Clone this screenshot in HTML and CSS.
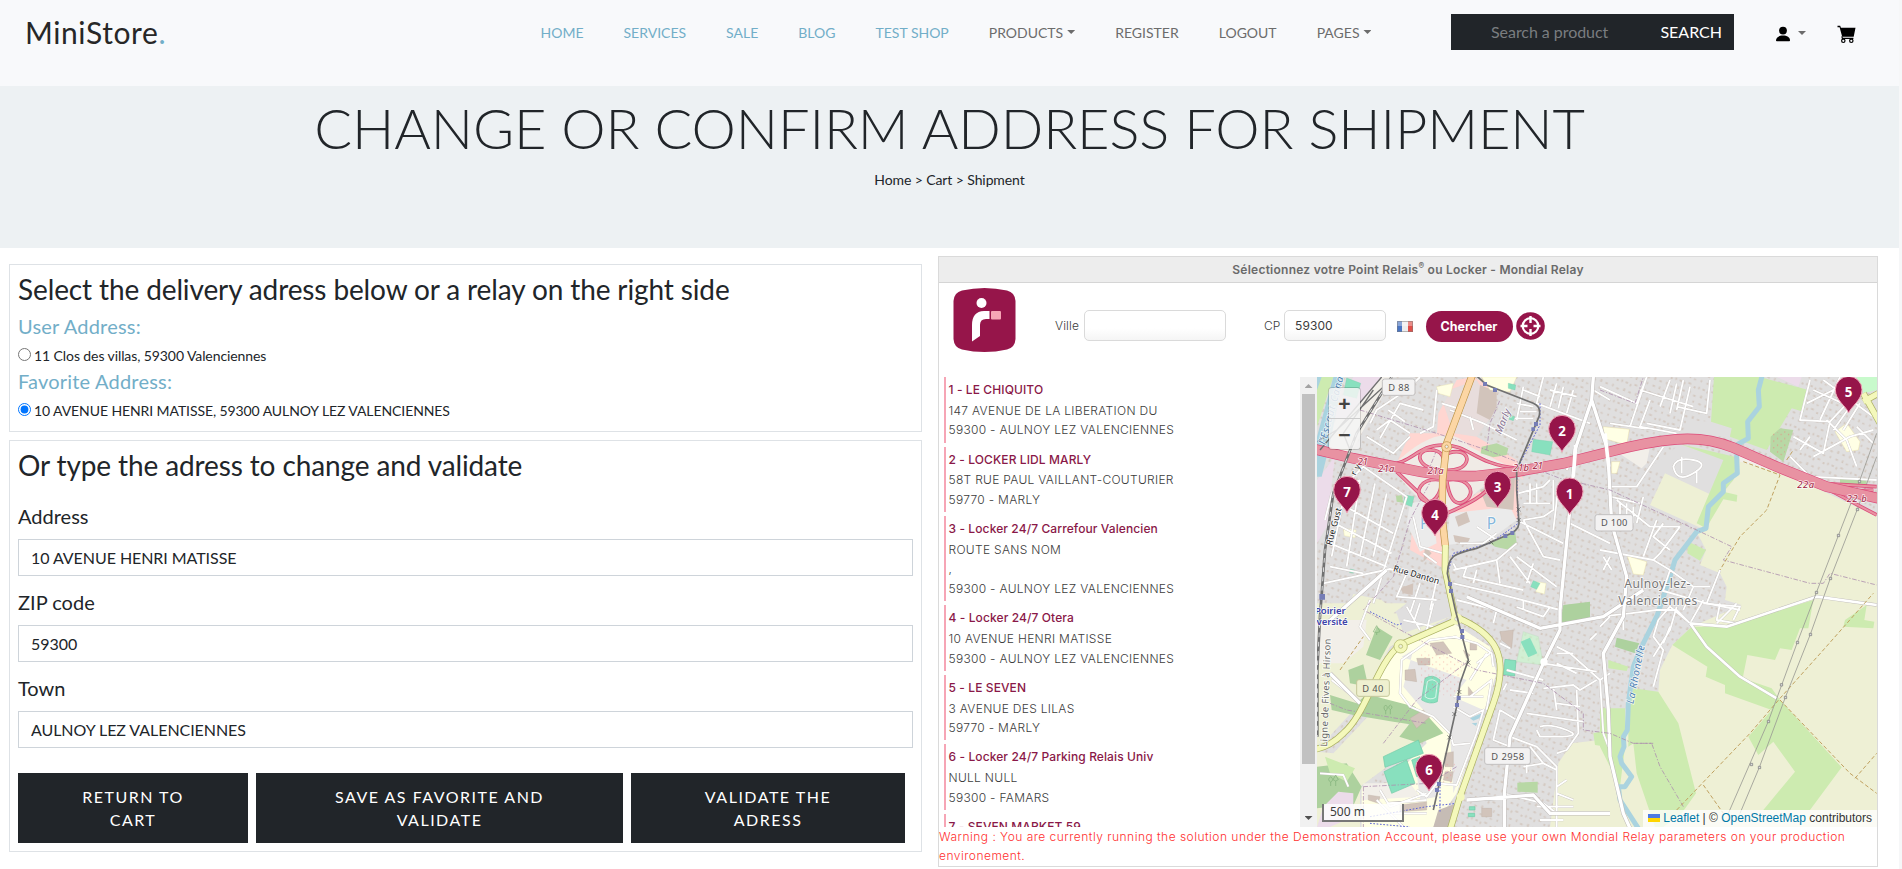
FILE: index.html
```html
<!DOCTYPE html>
<html lang="en">
<head>
<meta charset="utf-8">
<title>MiniStore - Shipment</title>
<link rel="stylesheet" href="styles.css">
</head>
<body>
<div class="page">
<header class="topbar">
  <a class="logo">MiniStore<span>.</span></a>
  <nav class="nav">
    <a class="accent">HOME</a><a class="accent">SERVICES</a><a class="accent">SALE</a><a class="accent">BLOG</a><a class="accent">TEST SHOP</a>
    <a class="drop">PRODUCTS</a><a>REGISTER</a><a>LOGOUT</a><a class="drop">PAGES</a>
  </nav>
  <form class="search"><input type="text" placeholder="Search a product"><button type="button">SEARCH</button></form>
  <div class="tools">
    <span class="drop user"><svg width="18" height="18" viewBox="0 0 18 18"><ellipse cx="9" cy="5.6" rx="3.9" ry="3.9"/><path d="M2 15.6c0-3.4 3-5 7-5s7 1.600 7 5c0 .5-.3.7-.8.700H2.800c-.5 0-.8-.2-.8-.7z"/></svg></span>
    <svg width="19" height="19" viewBox="0 0 19 19"><path d="M.5.8h2.700l.7 2h14.600l-1.800 9H5.200L2.600 2.200H.5z"/><path d="M4.800 11.300l.6 2h11" fill="none" stroke="#000" stroke-width="1.200"/><circle cx="6.300" cy="15.800" r="1.700" fill="none" stroke="#000" stroke-width="1.200"/><circle cx="14.300" cy="15.800" r="1.700" fill="none" stroke="#000" stroke-width="1.200"/></svg>
  </div>
</header>
<section class="banner">
  <h1>CHANGE OR CONFIRM ADDRESS FOR SHIPMENT</h1>
  <p>Home &gt; Cart &gt; Shipment</p>
</section>
<main class="content">
  <div class="left">
    <section class="card choose">
      <h3>Select the delivery adress below or a relay on the right side</h3>
      <h5>User Address:</h5>
      <label class="pick"><input type="radio" name="a"><span>11 Clos des villas, 59300 Valenciennes</span></label>
      <h5>Favorite Address:</h5>
      <label class="pick"><input type="radio" name="a" checked><span>10 AVENUE HENRI MATISSE, 59300 AULNOY LEZ VALENCIENNES</span></label>
    </section>
    <section class="card typed">
      <h3>Or type the adress to change and validate</h3>
      <label class="field"><span>Address</span><input value="10 AVENUE HENRI MATISSE"></label>
      <label class="field"><span>ZIP code</span><input value="59300"></label>
      <label class="field"><span>Town</span><input value="AULNOY LEZ VALENCIENNES"></label>
      <div class="buttons"><button>RETURN TO<br>CART</button><button>SAVE AS FAVORITE AND<br>VALIDATE</button><button>VALIDATE THE<br>ADRESS</button></div>
    </section>
  </div>
  <section class="relay">
    <div class="relay-title">Sélectionnez votre Point Relais<sup>®</sup> ou Locker - Mondial Relay</div>
    <div class="relay-form">
      <svg class="mr" width="63" height="64" viewBox="0 0 63 64"><path d="M9 2.500Q31.500-2.500 54 2.500Q62 4.500 62.500 13V51Q62 59.500 54 61.500Q31.500 66.500 9 61.500Q1 59.500.5 51V13Q1 4.500 9 2.500z" fill="#96154a"/><circle cx="28.500" cy="15" r="5" fill="#fff"/><path d="M19 53.500V37Q19 23.500 31 23H36.500V31H33Q27 31 27 37V48z" fill="#fff"/><rect x="38" y="23" width="10" height="8.500" rx="1" fill="#f6a5b5"/></svg>
      <span class="lab ville">Ville</span><input class="in-ville">
      <span class="lab cp">CP</span><input class="in-cp" value="59300">
      <svg class="flag" width="16" height="11" viewBox="0 0 16 11"><path fill="#4a76c4" d="M0 0h5v11H0z"/><path fill="#eee" d="M5 0h6v11H5z"/><path fill="#e0504a" d="M11 0h5v11h-5z"/><path d="M0 0h16v5H0z" fill="#fff" opacity=".35"/><path d="M.5.500h15v10H.5z" fill="none" stroke="#777" stroke-opacity=".5"/></svg>
      <button class="go" type="button">Chercher</button>
      <svg class="locate" width="29" height="28" viewBox="0 0 29 28"><ellipse cx="14.500" cy="14" rx="14.300" ry="13.800" fill="#96154a"/><circle cx="14.500" cy="14" r="7.800" fill="none" stroke="#fff" stroke-width="2.200"/><path d="M14.500 4v7M14.500 17v7M4.500 14h7M17.500 14h7" stroke="#fff" stroke-width="2.400"/></svg>
    </div>
    <div class="relay-body">
      <div class="list">
        <div class="item"><b>1 - LE CHIQUITO</b><span>147 AVENUE DE LA LIBERATION DU</span><span>59300 - AULNOY LEZ VALENCIENNES</span></div>
        <div class="item"><b>2 - LOCKER LIDL MARLY</b><span>58T RUE PAUL VAILLANT-COUTURIER</span><span>59770 - MARLY</span></div>
        <div class="item"><b>3 - Locker 24/7 Carrefour Valencien</b><span>ROUTE SANS NOM</span><span>,</span><span>59300 - AULNOY LEZ VALENCIENNES</span></div>
        <div class="item"><b>4 - Locker 24/7 Otera</b><span>10 AVENUE HENRI MATISSE</span><span>59300 - AULNOY LEZ VALENCIENNES</span></div>
        <div class="item"><b>5 - LE SEVEN</b><span>3 AVENUE DES LILAS</span><span>59770 - MARLY</span></div>
        <div class="item"><b>6 - Locker 24/7 Parking Relais Univ</b><span>NULL NULL</span><span>59300 - FAMARS</span></div>
        <div class="item"><b>7 - SEVEN MARKET 59</b></div>
      </div>
      <div class="scroll"><i class="up"></i><i class="thumb"></i><i class="down"></i></div>
      <div class="map">
<svg class="tiles" viewBox="21 21 1680 1350" width="560" height="450">
<defs>
<pattern id="h" width="74" height="66" patternUnits="userSpaceOnUse" patternTransform="rotate(22)"><path fill="#d3c8c0" d="M4 6h7v6H4zM18 8h5v8h-5zM31 4h9v5H31zM50 9h6v6h-6zM64 5h5v8h-5zM5 28h6v8H5zM22 31h8v5H22zM43 28h5v7h-5zM58 33h8v5H58zM8 51h8v5H8zM28 49h5v8h-5zM42 53h7v5h-7zM63 50h5v6h-5z"/></pattern>
<pattern id="dots" width="22" height="20" patternUnits="userSpaceOnUse"><path fill="#ee7d7d" d="M3 4h3v3H3zM14 12h3v3h-3z"/></pattern>
<g id="pin"><path d="M0 0C-7-20-40-38-40-70A40 40 0 1 1 40-70C40-38 7-20 0 0z" fill="#96154a" stroke="#f3a9bb" stroke-width="3"/></g>
<g id="minor"><path d="M180 160L200 120 290 60 330 21M200 180L240 150 300 190M235 120L285 155M210 205L270 100 340 120M170 200L250 250 300 200M45 450L65 370 150 330M65 560L110 340 160 290 290 380 240 540 190 700M90 400L250 490M75 460L245 550M60 520L230 590M60 590L160 610M150 330L110 590M195 340L150 560M230 370L190 560M40 640L240 597 290 610M430 580L440 600M430 600L560 570 620 520M470 590L460 620 640 660M560 570L570 640M500 600L490 640M620 560L740 650M600 560L660 640M670 580L650 640M430 640L560 670 750 720M290 610L260 680 380 690M330 640L300 730M380 630L360 720M620 450L760 520M640 450L700 560 750 570M625 370L700 350 720 330M640 400H720M730 330V420L700 440M660 340V400M680 340V400M700 440L640 450M745 350L730 480M700 21L680 100 840 160M720 60L800 80M740 40L720 110M760 50L745 115M790 60L770 130M640 50L620 150M420 120L520 160 620 210M480 140L490 180M620 100L670 110M640 60L690 80M630 125H680M615 145H670M850 60L900 90M800 240L770 300M780 460L900 520M310 440L330 530 400 550M500 470L560 510M450 520L520 520 560 490M340 550L380 580M380 60L370 170 330 190M395 100L460 120"/>
<path d="M870 50L980 100 1010 21M990 60L1150 110M1080 30L1050 110M1100 40L1080 130M1120 30L1100 120M1140 50L1110 180 1010 160M1020 90L990 170 1100 190M1200 30L1190 130 1100 110M900 160L1000 175M1010 21L960 170M890 350L980 350 1060 230M900 380L990 400M930 400V440M950 400V450M970 410V460M1000 380L980 460M1090 290Q1100 260 1150 270T1150 310 1090 290M1115 260V310M1160 300V340M920 390L1020 470 1110 470M1040 450L1000 560M1060 460L1030 500 1080 540M1110 470L1050 550 1030 570M870 540L1030 570 1080 600 1150 650M900 560L880 600M1230 600L1190 700M1150 650L1120 720M1080 600L1060 660M1050 660L1190 700 1290 720M1150 650H1200M880 560L905 600M1500 30L1470 150 1560 155 1630 80M1490 100L1570 60M1510 60L1620 110M1540 30L1690 140M1450 200L1540 250 1560 155M1470 240L1500 200M1440 260L1500 320 1700 330M1510 260L1620 200 1690 180M1590 21L1530 150M1550 150L1610 210 1640 290M1640 170L1690 220M1620 110L1570 180M1650 100L1600 180"/>
<g transform="translate(0 690)"><path d="M440 0L560 30 700 90M560 30L550 70M620 21L700 50 720 21M640 0V30M570 130L600 145M740 140L780 160 870 240 900 220M740 160H790M700 190L760 200 860 215M740 190L800 220M590 210L700 240M600 270L670 280M590 250L580 270M700 265L790 255 810 270 860 240M730 260L740 330M800 270L805 400 770 450 740 460M740 310L810 320M650 340L820 365M690 380Q720 370 770 390T740 410L690 410 680 390M600 410L680 440 740 500 740 620M570 330L550 420 600 440M570 330L620 360M660 440L700 490 740 510M640 500L700 490M650 480V520M740 560L770 540M740 580L790 600M690 660H760M740 620V681M680 620H790M840 120L860 100M580 580L700 610 740 640M870 240L880 400 895 440M210 570L240 620 350 580M230 610L350 600M250 640L350 640M200 600L280 681M320 570L350 590 380 550M30 520L100 525 115 560M65 240L150 305M380 550L440 555 500 400 520 330 480 350 430 320M480 430L430 435 420 400 370 350 300 320 270 280 275 180 360 120 440 110M430 110L500 130 545 160 550 200M480 240L530 160M500 190L540 160M530 330L545 240 480 290M180 0L150 80 180 120M430 290L520 290M280 60L370 80M290 20L330 90M330 10L310 70M370 10L350 90"/></g>
<path d="M1045 750L1030 800 1060 840 1030 950M1045 750L1080 710 1140 760M870 740L960 730 1040 720 1100 720 1140 760M1080 770L1060 820M1140 760L1180 690M1220 760L1280 700M1230 700L1220 750 1280 760M870 770L900 740M940 730V780M1100 710L1080 780 1030 860M1180 700L1290 710 1270 750"/></g>
</defs>
<path fill="#e0dfdf" d="M0 0h1720v1400H0z"/>
<path fill="url(#h)" d="M0 0h1720v1400H0z"/>
<!-- land use, north west -->
<path fill="#f2efe9" d="M21 200L60 180 160 21H250L110 270 21 245z"/>
<path fill="#ecdcea" d="M130 21H215L110 150 60 140zM21 330L75 260 50 470 21 520z"/>
<path fill="#cdebb0" d="M21 21H70L21 170z"/><path fill="#aad3df" d="M21 21H35L21 60zM70 21H100L60 220 35 320H21V200z"/>
<path fill="#88e0be" stroke="#6fcaa6" d="M110 24L152 40 140 85 100 75z"/>
<path fill="#ffd6d1" d="M490 21L560 60 550 130 500 200 620 270 640 330 600 300 480 290 430 310 340 300 340 210 380 200 385 130 440 30zM300 190L380 190 400 240 330 300 260 280zM600 330L625 330 625 450 500 480 470 440 430 430 500 370zM320 400L400 500 410 600 300 540 310 440z"/>
<path fill="#e0dfdf" d="M390 70L500 30 560 130 500 200 430 190z" opacity=".75"/>
<path fill="#f0ebe6" d="M250 285Q400 140 480 230L600 290Q500 360 440 420L400 430Q320 400 250 295z"/>
<path fill="#ebebeb" d="M420 430L600 410 620 450 540 510 410 525zM300 400L360 390 380 520 330 545 290 460z"/>
<path fill="#d2c4bb" d="M510 45L560 65 560 110 540 150 500 130zM510 360L615 320 610 420 530 410zM435 440L470 425 480 455 445 470zM270 655L310 640 308 675 280 670zM345 530L365 550 340 575zM430 495L480 505 470 525 435 515z"/>
<path fill="#ffffe5" stroke="#eae0a0" d="M515 21H620L600 65 540 60zM380 50L430 40 420 80 385 70zM100 475L138 480 135 503 103 497zM680 635L708 640 703 672 678 665z"/>
<path fill="#88e0be" stroke="#6fcaa6" d="M670 208L728 215 720 255 665 245zM285 375L312 380 305 410 280 400zM595 40L617 45 615 60 595 55zM670 632L690 640 680 658 662 650zM120 597L134 600 130 610 118 607zM600 135L614 140 610 152 597 148z"/>
<path fill="#b8d8a5" d="M515 230L560 220 595 235 590 255 550 262 512 250zM540 520L615 480 620 520 600 540 555 530zM770 705L840 700 840 735 770 735zM258 378L275 375 280 398 260 395z"/>
<path fill="#eef0d5" d="M130 672L215 690 250 720 240 760 50 760 110 730z"/>
<!-- land use, east -->
<g transform="translate(870 0)">
<path fill="#e0dfdf" d="M155 290L240 222 410 262 400 330 330 375 200 310zM333 155L395 175 390 200 250 195 260 150z"/>
<path fill="#eef0d5" d="M412 270L545 305 832 440V1371H-150L-125 1180-85 1120 0 1110 30 1050 60 1010 100 965 175 965 180 900 217 825 275 770 425 705 375 690 380 650 360 610 300 585 318 540 290 485 325 470 345 400 400 330zM195 310L335 375 305 475 150 405z"/>
<path fill="#e0dfdf" d="M5 880L60 895 85 960 60 1130 0 1120z"/><path fill="url(#h)" d="M5 880L60 895 85 960 60 1130 0 1120z"/>
<path fill="#cdebb0" d="M342 21H480L625 60 610 125 575 115 500 240 390 200 395 175 333 155zM240 222L410 262 400 330 370 365 412 375 410 395 370 388 318 475 290 460 370 270zM265 515L318 540 300 572 262 550zM30 1015H75V1130L60 1250 0 1130V1015zM25 870L85 890 80 903 25 895z"/>
<path fill="#c8facc" d="M770 21H832V60L790 70z"/>
<path fill="#ecdcea" d="M530 21H605L595 50z"/>
<path fill="#b8d8a5" d="M540 175L580 180 550 275 510 245 512 200zM720 325L800 325 800 345 720 345z"/><path fill="url(#dots)" d="M515 190L575 180 550 260 512 240z"/>
<path fill="#ffffe5" stroke="#e8d890" d="M10 170L88 178 80 225 10 205zM705 185L740 160 780 215 775 240 740 245zM82 558L140 575 130 615 100 612zM35 275L60 275 50 310 35 310z"/>
<path fill="#f2efe9" d="M50 245L150 230 140 280 125 295zM410 240L545 310 420 275z"/>
<path fill="#cdebb0" d="M217 825L275 770H380L640 690 625 775H600L575 840 540 835 525 870 442 855 428 925 515 955 540 990 725 1192 630 1320H490L585 1205 520 1115 475 1155 445 1100 515 1020 375 970V945L317 920 322 890zM100 955L175 965 235 1060 288 1270 245 1330 190 1371H165L110 1210 100 1120 85 1130V1010zM800 705L793 750 823 755 820 775 730 770 735 750z"/>
<path fill="#add19e" d="M50 803L118 820 105 850 45 830z"/>
<path fill="none" stroke="#aad3df" stroke-width="15" stroke-linejoin="round" d="M487 15L475 60 478 110 443 155 445 205 415 222 410 260 412 310 370 340V365L325 410 318 475 290 485 225 570 210 620 172 735 120 840 100 890 85 1000 82 1080 70 1100 72 1130 60 1160 65 1180 95 1220 75 1250H55L60 1290 115 1375"/>
</g>
<!-- land use, campus and fields south west -->
<g transform="translate(0 690)">
<path fill="#eef0d5" d="M21 10H290L250 40 420 50 240 140 150 310 21 450zM70 460L220 300 340 420 150 560V681H21V455z"/>
<path fill="#e0dfdf" d="M300 0H420V50L280 100 260 40z"/>
<path fill="#ffffe5" d="M200 250L280 120 430 70 540 140 560 220 520 340 440 580 370 681H155V560L230 550 350 430 310 340 210 300z"/>
<path fill="#f2efe9" d="M21 60H170L160 140 100 190 21 190zM160 550H300L330 590 160 600z"/>
<path fill="#add19e" d="M170 283L315 320 345 350 315 375 250 365 130 345 65 330 60 285 140 310zM200 80L248 110 210 180 168 165zM115 210L160 193 175 260 120 250zM350 345L400 400 330 430 268 410 300 370zM21 500L110 490 155 560 120 640 60 620 21 625zM760 15L840 5V60L750 72z"/>
<path fill="#cdebb0" d="M45 470L135 505 110 545 60 520zM850 400L890 390V440L855 435z"/><path fill="#ecdcea" d="M85 575L130 580V650L60 681H21L40 620z"/>
<path fill="#e8e7e7" d="M275 170L310 150 280 260 340 330 420 400 430 580 500 390 520 330 430 290 470 240zM320 520L390 520 380 590 330 600z"/>
<path fill="#c6bcb5" d="M385 630L440 610 420 681H370z"/>
<path fill="#88e0be" stroke="#6fcaa6" stroke-width="2" d="M345 235Q367 220 390 240L382 305Q360 315 335 300zM220 470L325 420 340 460 225 502zM222 515L290 480 315 550 245 580zM305 480L330 470 345 520 320 530zM585 178L618 182 614 228 580 224zM478 620H495V630H478zM475 640H494V650H475z"/>
<path fill="none" stroke="#fff" stroke-width="2" d="M352 245Q367 232 382 248L377 292Q360 302 345 290z"/>
<path fill="#d2c4bb" stroke="#baa99d" d="M285 210L315 208 320 245 285 240zM360 130L400 125 425 160 380 165zM300 355L340 330 360 350 320 385zM405 460L430 455 430 500 405 500zM405 515L430 515 425 545 400 540zM480 130L500 130 500 150 480 150zM320 175H360V195H325zM570 95L610 90 605 145 575 120zM515 625H545V650H515zM175 585L210 590 205 610 175 600zM460 150L480 165 470 175zM475 260L490 280 475 290zM270 615L350 605 350 630 270 635z"/>
<path fill="#c8facc" stroke="#9ed6a5" d="M640 95L685 110 700 195 620 185z" opacity=".6"/><path fill="#88e0be" d="M632 125L660 113 682 160 655 172z"/>
<path fill="#aad3df" d="M480 355L515 340 508 355 490 362zM485 370L502 368 498 378z"/>
<path fill="url(#dots)" opacity=".6" d="M330 150L460 180 440 300 330 260zM390 490L435 490 430 560 390 560z"/>
<path fill="#b8d8a5" d="M622 548L683 545V578L622 575z"/>
</g>
<!-- minor roads -->
<use href="#minor" fill="none" stroke="#c9c5c2" stroke-width="7.500" stroke-linejoin="round"/>
<use href="#minor" fill="none" stroke="#fff" stroke-width="5.500" stroke-linejoin="round"/>
<!-- main white roads -->
<g fill="none" stroke="#bdb9b7" stroke-width="13" stroke-linejoin="round"><path d="M850 21L845 90 795 240 790 310 750 720V780L700 880 600 1100 583 1270V1371M845 90L893 240 905 460 950 620 940 740 880 850 895 1020 900 1160 940 1330 960 1375M470 680L690 775 880 740 1000 660M470 1290L670 1275 720 1330 900 1330M50 760L230 600M60 910L150 1000"/><path stroke-width="10" d="M1140 760L1190 830 1290 920 1400 985M1140 760L1250 770 1520 680 1700 705"/></g>
<g fill="none" stroke="#fff" stroke-width="10" stroke-linejoin="round"><path d="M850 21L845 90 795 240 790 310 750 720V780L700 880 600 1100 583 1270V1371M845 90L893 240 905 460 950 620 940 740 880 850 895 1020 900 1160 940 1330 960 1375M470 680L690 775 880 740 1000 660M470 1290L670 1275 720 1330 900 1330M50 760L230 600M60 910L150 1000"/><path stroke-width="8" d="M1140 760L1190 830 1290 920 1400 985M1140 760L1250 770 1520 680 1700 705"/></g>
<circle cx="702" cy="876" r="11" fill="#fff"/>
<!-- boundaries, footpaths, power lines -->
<g fill="none" stroke="#ac8fae" stroke-width="3" stroke-dasharray="14 5 4 5" opacity=".8"><path d="M150 120L380 190 530 240 750 325 900 360 1160 480 1265 530 1240 570 1500 640 1540 640 1560 610 1700 645M380 240L360 290 510 330M530 240L540 160 570 90M380 300L300 450 250 620 160 720M870 60L975 100 1000 21M170 725L290 790 500 900 700 940 820 1030V1080L900 1090 970 1120 1030 1120M160 1250L360 1240 440 1190M160 1250V1371M220 1120L320 990 480 870M60 1000L110 1020 350 1060M1120 1310L1050 1190 1025 1120 970 1120"/></g>
<path fill="none" stroke="#c0a15f" stroke-width="3" stroke-dasharray="12 7" d="M1300 275L1410 315 1370 420 1290 500 1230 600M1100 1320L1320 1090 1410 985 1540 840 1690 670M1410 990L1620 1210 1700 1270M1635 1225L1700 1150M1180 1245L1240 1330M90 900L160 800M1430 270L1450 240"/>
<path fill="none" stroke="#5b62d6" stroke-width="3" stroke-dasharray="5 5" d="M690 100V165L650 240 620 300 625 460 540 520 430 550 410 620M180 725L260 765 280 760M180 1340L350 1310 440 1300M390 1240V1330M180 1360L300 1371"/>
<path fill="none" stroke="#9a9a94" stroke-width="2.500" d="M1700 190L1648 335 1585 497 1519 668 1462 817 1375 1054 1255 1330M1700 260L1642 418 1561 625 1501 793 1426 982 1348 1192 1290 1330"/>
<g fill="#ddd" stroke="#777" stroke-width="2"><path d="M1645 331h7v7h-7zM1582 493h7v7h-7zM1516 664h7v7h-7zM1459 814h7v7h-7zM1411 941h7v7h-7zM1372 1051h7v7h-7zM1321 1180h7v7h-7zM1639 415h7v7h-7zM1558 622h7v7h-7zM1498 790h7v7h-7zM1423 979h7v7h-7zM1345 1189h7v7h-7z"/></g>
<!-- motorway and slip roads -->
<g fill="none" stroke="#dc4a78" stroke-width="11"><path id="slip" d="M230 285C310 280 320 225 400 225S490 280 620 295M260 305L375 415M410 430C480 400 520 380 560 330L620 315M400 300C320 300 310 240 360 240S400 280 405 300M400 300C480 310 490 245 440 245S405 280 405 300M395 330C330 320 310 370 340 390S395 370 395 330M410 330C480 320 500 370 465 393S415 370 410 330M1530 340L1700 350M1530 345L1700 435M1600 365L1690 360"/></g>
<use href="#slip" fill="none" stroke="#e892a2" stroke-width="6"/>
<path fill="none" stroke="#dc4a78" stroke-width="32" d="M15 238L130 265 280 295Q400 322 500 318L620 305 760 280 900 245Q1010 215 1100 208T1270 233L1400 290 1550 350 1705 385"/>
<path fill="none" stroke="#e892a2" stroke-width="28" d="M15 238L130 265 280 295Q400 322 500 318L620 305 760 280 900 245Q1010 215 1100 208T1270 233L1400 290 1550 350 1705 385"/>
<path fill="none" stroke="#fff" stroke-width="11" d="M797 225L790 320M885 190L896 290"/>
<path fill="none" stroke="#bb9347" stroke-width="22" d="M487 15L410 220 398 330 396 440 406 528"/><path fill="none" stroke="#fcd6a4" stroke-width="18" d="M487 15L410 220 398 330 396 440 406 528"/><circle cx="410" cy="230" r="15" fill="#fcd6a4" stroke="#bb9347" stroke-width="2"/><circle cx="410" cy="230" r="5" fill="#eee" stroke="#bb9347" stroke-width="2"/>
<path fill="none" stroke="#aab060" stroke-width="20" d="M406 525L405 600 435 740C560 790 600 860 550 1000L450 1280 420 1380M430 755L270 825C200 880 170 1030 100 1090Q60 1130 15 1138M1660 70L1710 160M1660 95L1705 70"/><path fill="none" stroke="#f4f8bb" stroke-width="16" d="M406 525L405 600 435 740C560 790 600 860 550 1000L450 1280 420 1380M430 755L270 825C200 880 170 1030 100 1090Q60 1130 15 1138M1660 70L1710 160M1660 95L1705 70"/>
<circle cx="272" cy="829" r="20" fill="#f4f8bb" stroke="#aab060" stroke-width="2"/><circle cx="272" cy="829" r="6" fill="#eef0d5" stroke="#aab060" stroke-width="2"/><circle cx="440" cy="747" r="17" fill="#f4f8bb"/><circle cx="440" cy="747" r="6" fill="#eee" stroke="#aab060"/><circle cx="452" cy="1281" r="12" fill="#f4f8bb"/>
<!-- railways and tram -->
<g fill="none" stroke="#707070"><path stroke-width="8" d="M245 21L140 190 70 370 45 540 30 740 22 900V1100"/><path stroke-width="4" d="M215 21L30 240M232 40L80 180 21 215M190 60L100 190 120 240"/><path stroke-width="5" d="M497 15L530 45 670 100Q695 110 687 140L620 300V360L627 460Q625 485 585 498L500 535C430 550 415 560 412 610L425 670 436 720 475 870 450 940 440 1010 370 1320"/></g>
<path fill="none" stroke="#ddd" stroke-width="3" stroke-dasharray="14 14" d="M245 21L140 190 70 370 45 540 30 740 22 900V1100"/>
<g fill="#767db6"><path d="M519 36h12v12h-12zM549 54h12v12h-12zM672 156h12v12h-12zM664 172h11v11h-11zM580 492h12v12h-12zM601 483h12v12h-12zM414 636h12v12h-12zM417 657h12v12h-12zM450 777h12v12h-12zM451 795h12v12h-12zM440 978h12v12h-12zM435 999h12v12h-12zM381 1236h12v12h-12zM375 1254h12v12h-12zM28 672h17v17H28z"/></g>
<g stroke="#555" stroke-width="2"><path d="M620 412l12 12m0-12l-12 12M620 444l12 12m0-12l-12 12M538 511l12 12m0-12l-12 12M469 872l12 12m0-12l-12 12M442 960l12 12m0-12l-12 12M427 1026l12 12m0-12l-12 12M412 1096l12 12m0-12l-12 12"/></g>
<!-- labels -->
<g class="lbl">
<g class="shield"><rect x="217" y="27" width="98" height="49" rx="7"/><rect x="855" y="434" width="114" height="49" rx="7"/><rect x="524" y="1133" width="137" height="50" rx="7"/><rect x="140" y="929" width="98" height="50" rx="7"/></g>
<g class="road"><text x="235" y="63" textLength="63">D 88</text><text x="873" y="469" textLength="79">D 100</text><text x="544" y="1169" textLength="98">D 2958</text><text x="157" y="965" textLength="63">D 40</text></g>
<g class="exit"><text x="143" y="286" textLength="31">21</text><text x="205" y="307" textLength="48">21a</text><text x="353" y="313" textLength="48">21a</text><text x="609" y="303" textLength="48">21b</text><text x="668" y="297" textLength="31">21</text><text x="1462" y="354" textLength="50">22a</text><text x="1610" y="397" textLength="60">22 b</text></g>
<g class="street"><text transform="translate(248 603) rotate(16)" textLength="143">Rue Danton</text><text transform="translate(65 527) rotate(-75)" textLength="115">Rue Gust</text><text transform="translate(125 340) rotate(-62)" textLength="58">ury</text></g>
<text class="town" x="943" y="655" textLength="198">Aulnoy-lez-</text><text class="town" x="925" y="705" textLength="237">Valenciennes</text>
<text class="suburb" transform="translate(573 194) rotate(-68)" textLength="78">Marly</text>
<text class="line" transform="translate(51 1130) rotate(-88)" textLength="324">Ligne de Fives à Hirson</text>
<text class="water" transform="translate(970 1003) rotate(-79)" textLength="178">La Rhonelle</text>
<text class="water" transform="translate(46 225) rotate(-75)" textLength="220">l’Escaut Canal</text>
<g class="station"><text x="15" y="731" textLength="92">Poirier</text><text x="12" y="764" textLength="101">iversité</text></g>
<g class="park"><text x="330" y="478">P</text><text x="530" y="476">P</text></g>
</g>
<g fill="none" stroke="#80b078" stroke-width="2"><path d="M227 1033v-10q-10-10 0-18q10 8 0 18m14 10v-14q-10-8 0-14q10 6 0 14M62 1248v-12q-12-6 0-16q12 10 0 16m15 12v-15l-8-4 8-14 8 14-8 4M200 795v-7l-10-3 10-18 10 18-10 3"/></g>
<g class="pins">
<use href="#pin" x="111" y="429"/><text x="111" y="382">7</text><use href="#pin" x="375" y="498"/><text x="375" y="450">4</text><use href="#pin" x="563" y="414"/><text x="563" y="367">3</text><use href="#pin" x="756" y="246"/><text x="756" y="199">2</text><use href="#pin" x="779" y="434"/><text x="779" y="386">1</text><use href="#pin" x="1616" y="129"/><text x="1616" y="82">5</text><use href="#pin" x="357" y="1263"/><text x="357" y="1215">6</text>
</g>
</svg>
        <div class="zoom"><span>+</span><span>−</span></div>
        <div class="scale">500 m</div>
        <div class="credit"><svg width="12" height="8" viewBox="0 0 12 8"><path fill="#4C7BE1" d="M0 0h12v4H0z"/><path fill="#FFD500" d="M0 4h12v4H0z"/></svg> <a>Leaflet</a> | © <a>OpenStreetMap</a> contributors</div>
      </div>
    </div>
    <p class="warn"><span>Warning : You are currently running the solution under the Demonstration Account, please use your own Mondial Relay parameters on your production</span><span>environement.</span></p>
  </section>
</main>
</div>
</body>
</html>
```
FILE: styles.css
```css
* { box-sizing: border-box; }
body { margin: 0; padding-right: 3px; background: #f6f7f8; font-family: Lato, sans-serif; color: #212529; overflow: hidden; }
.page { height: 869px; background: #fff; overflow: hidden; }
h1, h3, h5, p { margin: 0; font-weight: 400; }
button, input { font-family: inherit; }

.topbar { height: 86px; background: #f8f9fb; display: grid; grid-template-columns: 515px 911px 324px 1fr; align-items: start; }
.logo { padding: 10px 0 0 25px; font-size: 30px; line-height: 44px; color: #272727; letter-spacing: .6px; }
.logo span { color: #72aec8; }
.nav { display: flex; gap: 40px; padding: 22px 0 0 25.500px; font-size: 14px; line-height: 21px; white-space: nowrap; color: #6c6c6c; }
.accent { color: #72aec8; }
.drop { display: flex; }
.drop::after { content: ""; margin: 8px 0 0 4px; width: 8px; height: 4px; background: currentColor; clip-path: polygon(0 0, 100% 0, 50% 100%); }
.search { margin: 14px 0 0 25px; width: 283px; height: 36px; background: #212529; display: flex; align-items: center; justify-content: space-between; padding: 0 12px 2px 40px; }
.search input { width: 140px; padding: 0; border: 0; background: none; font-size: 16px; letter-spacing: -.05px; }
.search input::placeholder { color: #7a7d80; opacity: 1; }
.search button { border: 0; padding: 0; background: none; color: #fff; font-size: 16px; }
.tools { display: flex; gap: 31px; padding: 25px 0 0 24px; }
.user { color: #6c6c6c; }
.user svg { fill: #000; }
.user::after { margin-left: 6px; margin-top: 6px; }

.banner { height: 162px; background: #edf1f3; text-align: center; }
.banner h1 { padding-top: 8px; font-size: 56px; line-height: 67px; font-weight: 300; white-space: nowrap; letter-spacing: -.12px; }
.banner p { margin-top: 8px; font-size: 14px; line-height: 21px; letter-spacing: -.1px; }

.content { display: grid; grid-template-columns: 913px 940px; column-gap: 16px; padding-left: 9px; }
.left { padding-top: 16px; display: grid; gap: 8px; align-content: start; }
.card { border: 1px solid #dee2e6; padding: 7px 8px 8px; }
.choose { height: 168px; }
.typed { height: 412px; }
h3 { font-size: 28px; line-height: 34px; letter-spacing: -.12px; }
h5 { margin-top: 5px; font-size: 20px; line-height: 24px; letter-spacing: .2px; color: #72aec8; }
.choose h3 + h5 { margin-top: 8px; }
.pick { display: flex; height: 26px; align-items: flex-start; font-size: 14px; line-height: 17px; letter-spacing: -.09px; }
.pick input { width: 13px; height: 13px; margin: 10px 3px 0 0; flex: none; }
.pick span { padding-top: 9px; }
.field { display: block; }
.field span { display: block; padding: 14px 0 11px; font-size: 20px; line-height: 24px; }
.field input { display: block; width: 895px; height: 37px; border: 1px solid #ced4da; padding: 0 12px; font-size: 16px; letter-spacing: -.06px; color: #212529; }
.typed h3 + .field span { padding-top: 22px; }
.buttons { display: grid; grid-template-columns: 230px 367px 274px; gap: 8px; margin-top: 25px; }
.buttons button { height: 70px; border: 0; background: #212529; color: #fff; font-size: 16px; line-height: 23px; letter-spacing: 1.5px; padding: 0; }

.relay { margin-top: 8px; height: 611px; border: 1px solid #dadada; font-family: Inter, sans-serif; color: #3c3c3c; }
.relay-title { height: 26px; background: #ededed; border-bottom: 1px solid #d5d5d5; text-align: center; font-size: 12px; font-weight: 600; line-height: 26px; letter-spacing: .25px; color: #6a6a6a; }
.relay-title sup { font-size: 8.500px; line-height: 0; }
.relay-form { height: 94px; display: flex; align-items: flex-start; padding: 5px 0 0 14px; font-size: 12px; }
.lab { line-height: 37px; padding-top: 18.500px; letter-spacing: .1px; font-weight: 300; }
.ville { width: 29px; margin-left: 39px; }
.cp { width: 20px; margin-left: 38px; }
.relay-form input { height: 31px; margin-top: 22px; border: 1px solid #dadada; border-radius: 5px; background: linear-gradient(#fff 60%, #f5f5f5); padding: 0 10px; font-size: 12px; color: #3c3c3c; letter-spacing: .1px; }
.in-ville { width: 142px; }
.in-cp { width: 102px; }
.flag { margin: 33px 12.500px 0 11px; }
.go { width: 87px; height: 31px; margin-top: 23px; border: 0; border-radius: 16px; background: #96154a; color: #fff; font-size: 12.500px; font-weight: 700; padding: 0; }
.locate { margin: 24px 0 0 3px; }
.relay-body { display: flex; height: 450px; }
.list { width: 361px; padding-left: 5px; overflow: hidden; }
.item { border-left: 2px solid #f6a5b5; margin-bottom: 4px; padding: 2px 0 2.800px 2.500px; font-size: 12px; }
.item b { display: block; font-weight: 500; line-height: 21.600px; color: #8a1848; letter-spacing: .1px; }
.item span { display: block; line-height: 19.600px; letter-spacing: .3px; white-space: nowrap; font-weight: 300; }
.scroll { width: 17px; background: #f1f1f1; display: flex; flex-direction: column; align-items: center; }
.up, .down { width: 8px; height: 4px; background: #a3a3a3; clip-path: polygon(0 100%, 50% 0, 100% 100%); margin: 7px 0 6px; }
.down { background: #505050; clip-path: polygon(0 0, 100% 0, 50% 100%); margin: auto 0 7px; }
.thumb { width: 13px; height: 370px; background: #c1c1c1; }
.map { position: relative; width: 560px; height: 450px; overflow: hidden; }
.tiles { display: block; }
.zoom { position: absolute; left: 12px; top: 11px; width: 31px; height: 61px; border-radius: 3px; background: rgba(244,244,244,.85); box-shadow: 0 0 0 1px rgba(0,0,0,.15); font: bold 21px/32px "Liberation Sans", sans-serif; text-align: center; color: #444; }
.zoom span { display: block; height: 30px; }
.zoom span + span { border-top: 1px solid #ccc; }
.scale { position: absolute; left: 5px; bottom: 5px; width: 82px; height: 18px; border: 2px solid #777; border-top: 0; background: rgba(255,255,255,.8); padding-left: 6px; font: 12px/15px "Noto Sans", sans-serif; }
.credit { position: absolute; right: 0; bottom: 0; height: 17px; padding: 0 5px; background: rgba(255,255,255,.75); font: 12px/16px "Liberation Sans", sans-serif; color: #333; white-space: nowrap; }
.credit a { color: #0078a8; }
.warn { font-size: 12px; line-height: 19px; color: #ff3030; white-space: nowrap; letter-spacing: .48px; font-weight: 300; }
.warn span { display: block; }

.lbl text { font-family: "Noto Sans", sans-serif; stroke: #fff; stroke-width: 5px; stroke-opacity: .75; paint-order: stroke; fill: #333; }
.shield rect { fill: #f3f2f2; stroke: #c2c0c0; stroke-width: 3px; }
.lbl .shield rect:last-child { fill: #eff0d0; stroke: #c5c79a; }
.lbl .road text { font-size: 28px; stroke: none; fill: #555; }
.lbl .exit text { font-size: 28px; font-style: italic; fill: #a02040; }
.lbl .street text { font-size: 26px; fill: #222; }
.lbl .town { font-size: 36px; fill: #777; }
.lbl .suburb { font-size: 30px; font-style: italic; fill: #847090; }
.lbl .line { font-size: 28px; fill: #666; }
.lbl .water { font-size: 30px; font-style: italic; fill: #4d80b3; }
.lbl .station text { font-size: 29px; font-weight: 600; fill: #4044aa; }
.lbl .park text { font-size: 46px; fill: #85b7dc; }
.pins text { font: bold 40px "Noto Sans", sans-serif; fill: #fff; text-anchor: middle; }
```
